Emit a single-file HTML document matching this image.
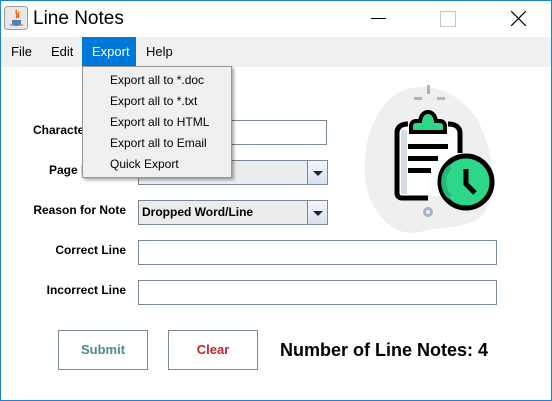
<!DOCTYPE html>
<html><head><style>
body{margin:0;width:552px;height:401px;overflow:hidden;background:#fff;font-family:"Liberation Sans",Arial,sans-serif;position:relative}
.win{position:absolute;left:0;top:0;width:550px;height:399px;border:1px solid #1883d7}
.abs{position:absolute}
.lbl{position:absolute;font-size:12px;font-weight:bold;color:#000;text-align:right;width:126px;left:0}
.tf{position:absolute;border:1px solid #7a8a99;background:#fff;box-sizing:border-box}
.cb{position:absolute;border:1px solid #7a8a99;background:#ececec;box-sizing:border-box;font-size:12px;font-weight:bold;line-height:23px;padding-left:3px}
.arr{position:absolute;right:0;top:0;width:19px;height:23px;border-left:1px solid #7a8a99;background:linear-gradient(#f4f7fb,#d5e0ee)}
.arr:after{content:"";position:absolute;left:5px;top:10px;border-left:5px solid transparent;border-right:5px solid transparent;border-top:5px solid #222}
.btn{position:absolute;border:1px solid #7a8a99;box-sizing:border-box;background:#fff;font-size:13px;font-weight:bold;text-align:center;line-height:38px}
.mi{position:absolute;font-size:13px;top:44px}
.pm{position:absolute;left:27px;font-size:12px;color:#000}
</style></head><body>
<div class="win"></div>
<svg class="abs" style="left:4px;top:6px" width="24" height="24"><rect x="0.5" y="0.5" width="23" height="23" rx="3" fill="#e8e8e8" stroke="#9a9a9a"/><path d="M8 14h9v3c0 2-2 3-4.5 3S8 19 8 17z" fill="#5a7ea8"/><path d="M13 4c-3 3 2 4-1 8M15 6c-2 2 1 3-1 6" stroke="#e06a1a" stroke-width="1.5" fill="none"/><path d="M6 19h13" stroke="#5a7ea8"/></svg>
<div class="abs" style="left:33px;top:8px;font-size:19px;color:#000">Line Notes</div>
<div class="abs" style="left:371px;top:18px;width:15px;height:1px;background:#000"></div>
<div class="abs" style="left:440px;top:11px;width:14px;height:14px;border:1px solid #c8c8c8"></div>
<svg class="abs" style="left:511px;top:11px" width="15" height="15"><path d="M0 0L15 15M15 0L0 15" stroke="#000" stroke-width="1.2"/></svg>
<div class="abs" style="left:1px;top:37px;width:550px;height:30px;background:#f0f0f0"></div>
<div class="abs" style="left:82px;top:37px;width:54px;height:30px;background:#0078d7"></div>
<div class="mi" style="left:11px">File</div>
<div class="mi" style="left:51px">Edit</div>
<div class="mi" style="left:92px;color:#fff">Export</div>
<div class="mi" style="left:146px">Help</div>
<div class="abs" style="left:33px;top:123px;font-size:12px;font-weight:bold">Character Name</div>
<div class="tf" style="left:138px;top:120px;width:189px;height:25px"></div>
<div class="abs" style="left:49px;top:163px;font-size:12px;font-weight:bold">Page Number</div>
<div class="cb" style="left:138px;top:160px;width:190px;height:25px"><div class="arr"></div></div>
<div class="lbl" style="top:203px">Reason for Note</div>
<div class="cb" style="left:138px;top:200px;width:190px;height:25px">Dropped Word/Line<div class="arr"></div></div>
<div class="lbl" style="top:243px">Correct Line</div>
<div class="tf" style="left:138px;top:240px;width:359px;height:25px"></div>
<div class="lbl" style="top:283px">Incorrect Line</div>
<div class="tf" style="left:138px;top:280px;width:359px;height:25px"></div>
<div class="btn" style="left:58px;top:330px;width:90px;height:40px;color:#4a8c8c">Submit</div>
<div class="btn" style="left:168px;top:330px;width:90px;height:40px;color:#c0262b">Clear</div>
<div class="abs" style="left:280px;top:340px;font-size:18px;font-weight:bold">Number of Line Notes: 4</div>
<svg class="abs" style="left:360px;top:80px" width="140" height="160" viewBox="0 0 140 160">
<path d="M40 12C70 -2 105 15 120 45C135 78 136 110 126 130C115 150 85 145 60 152C35 158 12 135 6 105C0 70 12 28 40 12Z" fill="#efefef"/>
<rect x="67" y="5" width="3" height="9" fill="#a9b3c4"/>
<rect x="54" y="17" width="8" height="3" fill="#a9b3c4"/><rect x="77" y="17" width="8" height="3" fill="#a9b3c4"/>
<circle cx="68" cy="132" r="5" fill="#a9b3c4"/><circle cx="68" cy="132" r="2" fill="#eee"/>
<path d="M38 46h62v70H38z" fill="#fff"/>
<path d="M41 50v64h6V50z" fill="#d7dbe3"/>
<path d="M48 44c-7 0-11 3-11 9v60c0 3 2 5 5 5h26" stroke="#000" stroke-width="5" fill="none"/>
<path d="M88 44c7 0 12 3 12 9v20" stroke="#000" stroke-width="5" fill="none"/>
<path d="M51 52v-6c0-3 2-5 5-5h4c1-6 4-9 8-9s7 3 8 9h4c3 0 5 2 5 5v6z" fill="#2ed68a" stroke="#000" stroke-width="4"/>
<rect x="48" y="64" width="40" height="5" fill="#000"/>
<rect x="48" y="76" width="30" height="5" fill="#000"/>
<rect x="48" y="88" width="23" height="5" fill="#000"/>
<circle cx="106" cy="102" r="26" fill="#2ed68a" stroke="#000" stroke-width="5"/>
<path d="M90 117a21 21 0 0 1 0-30" stroke="#25b875" stroke-width="5" fill="none"/>
<path d="M106 89v15l9 9" stroke="#000" stroke-width="5" fill="none"/>
</svg>
<div class="abs" style="left:82px;top:66px;width:148px;height:110px;background:#f0f0f0;border:1px solid #979797;box-shadow:2px 2px 3px rgba(0,0,0,0.35)">
<div class="pm" style="top:6px">Export all to *.doc</div>
<div class="pm" style="top:27px">Export all to *.txt</div>
<div class="pm" style="top:48px">Export all to HTML</div>
<div class="pm" style="top:69px">Export all to Email</div>
<div class="pm" style="top:90px">Quick Export</div>
</div>
</body></html>
